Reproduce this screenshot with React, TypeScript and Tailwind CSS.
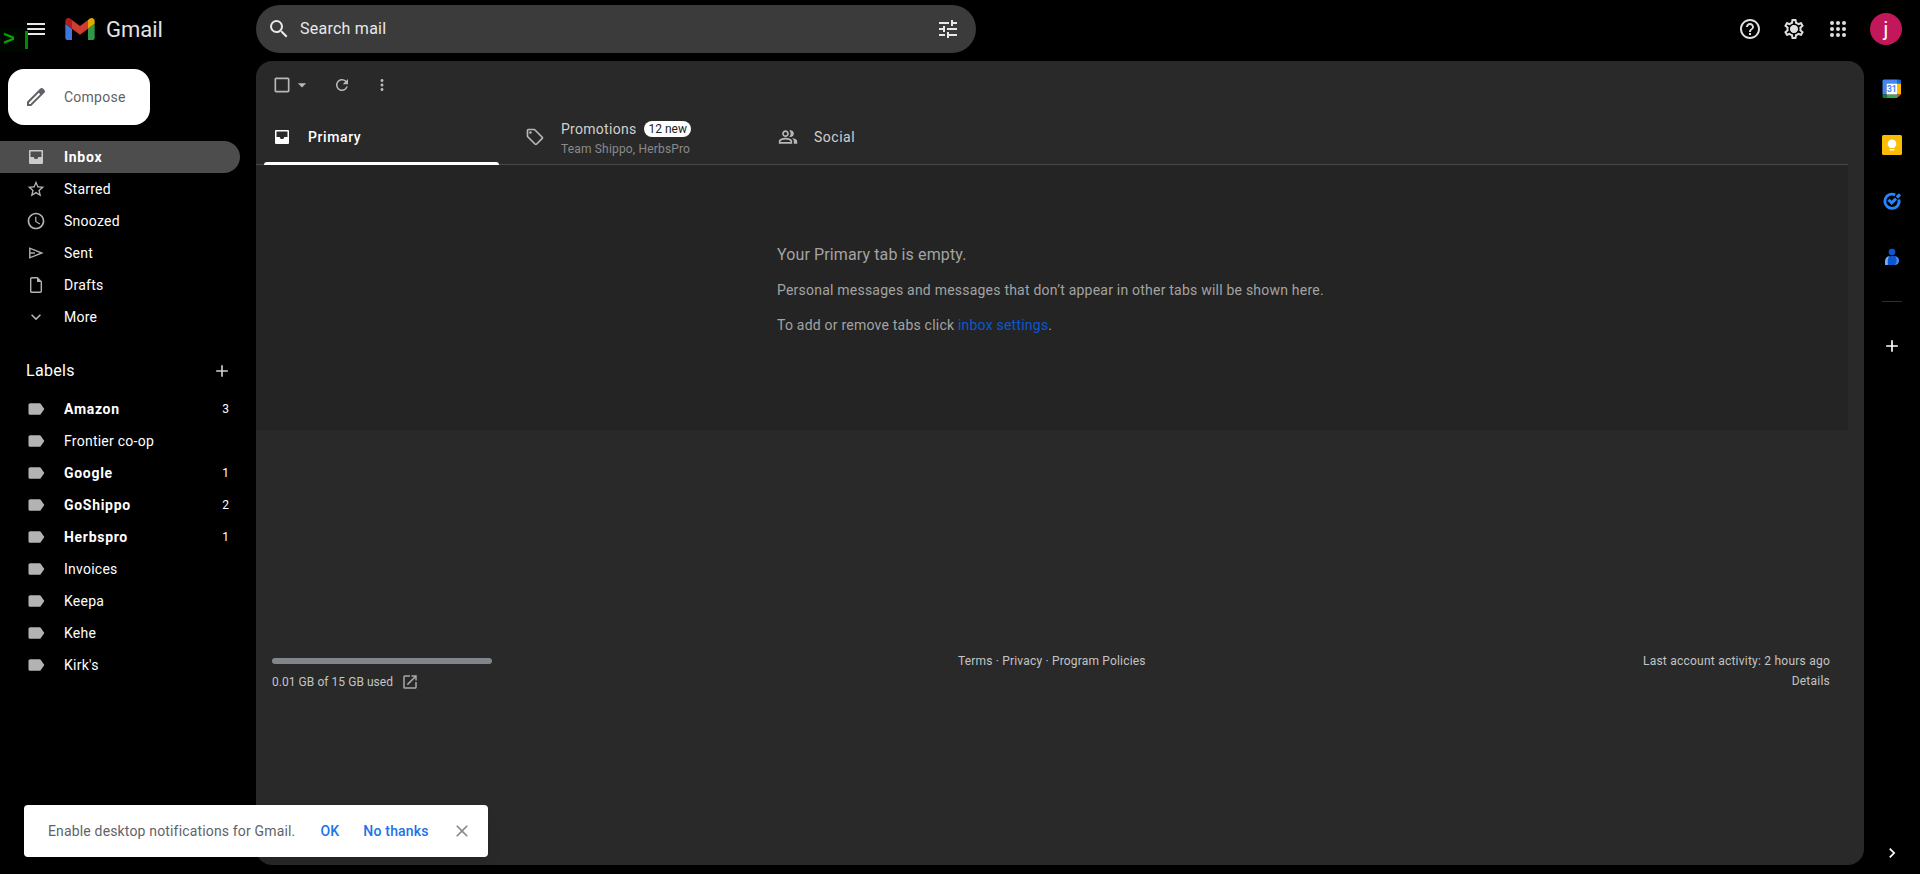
import React from 'react';
import {
  MdAdd,
  MdArrowDropDown,
  MdCheckBoxOutlineBlank,
  MdChevronRight,
  MdClose,
  MdExpandMore,
  MdHelpOutline,
  MdLabel,
  MdMenu,
  MdMoreVert,
  MdOpenInNew,
  MdOutlineLocalOffer,
  MdOutlinePeopleAlt,
  MdOutlineSettings,
  MdRefresh,
  MdSchedule,
  MdSearch,
  MdStarBorder,
  MdTune,
} from 'react-icons/md';

interface IconProps {
  className?: string;
}

interface NavItemProps {
  Icon: React.ElementType;
  label: string;
  count?: number;
  active?: boolean;
  bold?: boolean;
  iconClass?: string;
}

const InboxIcon = ({ className }: IconProps) => (
  <svg viewBox="0 0 20 20" className={className} fill="currentColor">
    <path fillRule="evenodd" d="M4 3h12a1 1 0 0 1 1 1v12a1 1 0 0 1-1 1H4a1 1 0 0 1-1-1V4a1 1 0 0 1 1-1zm.5 1.500V10h3.200l1 2h2.600l1-2h3.200V4.500z" />
  </svg>
);

const SentIcon = ({ className }: IconProps) => (
  <svg viewBox="0 0 20 20" className={className} fill="none" stroke="currentColor" strokeWidth="1.400">
    <path d="M3.800 5.200v9.600L15.800 10z" />
    <path d="M4 10h5" />
  </svg>
);

const DraftIcon = ({ className }: IconProps) => (
  <svg viewBox="0 0 20 20" className={className} fill="none" stroke="currentColor" strokeWidth="1.400">
    <path d="M5.700 2.700h5.600l4 4v9.600a1 1 0 0 1-1 1H5.700a1 1 0 0 1-1-1V3.700a1 1 0 0 1 1-1z" />
    <path fill="currentColor" stroke="none" d="M11 2.500l4.500 4.500H11z" />
  </svg>
);

const PencilIcon = ({ className }: IconProps) => (
  <svg viewBox="0 0 24 24" className={className} fill="currentColor">
    <path d="M20.410 4.940l-1.350-1.350c-.78-.78-2.050-.78-2.830 0L3 16.820V21h4.180L20.410 7.770c.79-.78.79-2.050 0-2.830zm-14 14.120L5 19v-1.360l9.820-9.820 1.410 1.410-9.820 9.830z" />
  </svg>
);

const SettingsIcon = ({ className }: IconProps) => (
  <svg viewBox="0 0 24 24" className={className} fill="currentColor">
    <MdOutlineSettings size={24} />
    <circle cx="12" cy="12" r="3.700" />
  </svg>
);

const AppsIcon = ({ className }: IconProps) => (
  <svg viewBox="0 0 24 24" className={className} fill="currentColor">
    {[6, 12, 18].map((y) => [6, 12, 18].map((x) => <circle key={`${x}-${y}`} cx={x} cy={y} r="2" />))}
  </svg>
);

const GmailLogo = () => (
  <svg viewBox="52 42 88 66" className="h-[22px] w-[30px]">
    <path fill="#3f76dc" d="M58 108h14V74L52 59v43c0 3.32 2.69 6 6 6" />
    <path fill="#2f974a" d="M120 108h14c3.32 0 6-2.69 6-6V59l-20 15" />
    <path fill="#e0a800" d="M120 48v26l20-15v-8c0-7.42-8.47-11.65-14.4-7.2" />
    <path fill="#d23c30" d="M72 74V48l24 18 24-18v26L96 92" />
    <path fill="#b01e1b" d="M52 51v8l20 15V48l-5.6-4.2c-5.94-4.45-14.4-.22-14.4 7.2" />
  </svg>
);

const CalendarIcon = () => (
  <svg viewBox="0 0 20 20" className="h-5 w-5">
    <path fill="#4285f4" d="M2 .5h13v4H4.500v11H.5V2A1.500 1.500 0 0 1 2 .5z" />
    <path fill="#1967d2" d="M15 .5h2.500A1.500 1.500 0 0 1 19 2v2.500h-4z" />
    <path fill="#fbbc04" d="M15 4.500h4v11h-4z" />
    <path fill="#34a853" d="M4.500 15.500H15V19H4.500z" />
    <path fill="#188038" d="M.5 15.500h4V19H2A1.500 1.500 0 0 1 .5 17.500z" />
    <path fill="#ea4335" d="M15 15.500h4L15 19z" />
    <path fill="#fff" d="M4.500 4.500H15v11H4.500z" />
    <text x="9.800" y="13" fontSize="8.500" fontWeight="700" textAnchor="middle" fill="#4285f4">31</text>
  </svg>
);

const KeepIcon = () => (
  <svg viewBox="0 0 20 20" className="h-5 w-5">
    <rect width="20" height="20" rx="1.500" fill="#fbbc04" />
    <path fill="#fff" d="M10 4.500a4.300 4.300 0 0 0-2.500 7.800V13h5v-.7A4.300 4.300 0 0 0 10 4.500zM7.700 14h4.600v1.500H7.700z" />
  </svg>
);

const TasksIcon = () => (
  <svg viewBox="0 0 20 20" className="h-5 w-5" fill="none" stroke="#2684fc">
    <path d="M13.200 3.900A7.100 7.100 0 1 0 16.900 8.500" strokeWidth="2.800" />
    <path d="M6.500 8.700l3.200 3.200 4.300-4.300" strokeWidth="3" />
    <path d="M14.800 6.500l3.200-3.200" strokeWidth="3.200" />
  </svg>
);

const ContactsIcon = () => (
  <svg viewBox="0 0 20 20" className="h-5 w-5">
    <circle cx="10" cy="5" r="3.300" fill="#0b57d0" />
    <path fill="#7baaf7" d="M7.500 9.200V18H3v-3.800c0-3 1.700-5 4.500-5z" />
    <path fill="#4c8df6" d="M12.500 9.200c2.800 0 4.500 1.800 4.500 4.300s-1.700 4.500-4.500 4.500z" />
    <path fill="#0b57d0" d="M9.500 9h1.700c2.200 0 3.500 1.900 3.500 4.400S13.400 18 11.200 18H5.800v-4.500C5.800 10.900 7.200 9 9.500 9z" />
  </svg>
);

const NavItem = ({ Icon, label, count, active, bold, iconClass = 'text-[#b3b3b3]' }: NavItemProps) => (
  <a
    className={`flex h-8 w-60 items-center rounded-r-full pl-[26px] pr-[11px] text-sm text-white ${
      active ? 'bg-[#4d4d4d]' : ''
    } ${bold ? 'font-bold tracking-[0.7px]' : 'tracking-[0.25px]'}`}
  >
    <Icon className={`h-5 w-5 shrink-0 ${iconClass}`} />
    <span className="ml-[18px] flex-1 whitespace-nowrap">{label}</span>
    {count && <span className="text-xs font-normal tracking-normal">{count}</span>}
  </a>
);

const mailboxes = [
  { Icon: InboxIcon, label: 'Inbox', active: true, bold: true, iconClass: 'text-[#cacaca]' },
  { Icon: MdStarBorder, label: 'Starred' },
  { Icon: MdSchedule, label: 'Snoozed' },
  { Icon: SentIcon, label: 'Sent' },
  { Icon: DraftIcon, label: 'Drafts' },
  { Icon: MdExpandMore, label: 'More' },
];

const labels = [
  { label: 'Amazon', count: 3 },
  { label: 'Frontier co-op' },
  { label: 'Google', count: 1 },
  { label: 'GoShippo', count: 2 },
  { label: 'Herbspro', count: 1 },
  { label: 'Invoices' },
  { label: 'Keepa' },
  { label: 'Kehe' },
  { label: "Kirk's" },
];

const Header = () => (
  <header className="flex h-[61px] items-start">
    <div className="flex h-[58px] w-64 items-center pl-6">
      <MdMenu className="h-6 w-6 text-[#e8e8e8]" />
      <div className="ml-[17px]">
        <GmailLogo />
      </div>
      <span className="ml-[11px] text-[22px] text-[#e3e3e3]">Gmail</span>
    </div>
    <div className="mt-[5px] flex h-12 w-[720px] items-center rounded-full bg-[#3b3b3b] pl-[11px] pr-4 text-[#e8e8e8]">
      <MdSearch className="h-6 w-6" />
      <span className="ml-[9px] flex-1 text-base tracking-[0.25px]">Search mail</span>
      <MdTune className="h-6 w-6" />
    </div>
    <div className="ml-auto flex h-[58px] items-center gap-5 pr-[18px] text-[#dedede]">
      <MdHelpOutline className="h-6 w-6" />
      <SettingsIcon className="h-6 w-6" />
      <AppsIcon className="h-6 w-6" />
      <div className="flex h-8 w-8 items-center justify-center rounded-full bg-[#c2185b] text-xl text-white">j</div>
    </div>
  </header>
);

const Prompt = () => (
  <div className="absolute left-0 top-7 flex h-6 w-7 items-center justify-between bg-[#001400]/30 pl-[3px] font-['Liberation_Mono',monospace] text-xl font-bold text-[#00a800]">
    <span>&gt;</span>
    <span className="h-[18px] w-[3px] bg-[#008a00]" />
  </div>
);

const Sidebar = () => (
  <nav className="w-64 shrink-0 pt-2">
    <button className="ml-2 flex h-14 w-[142px] items-center rounded-2xl bg-white pl-4 text-sm tracking-[0.25px] text-[#5f6368]">
      <PencilIcon className="h-6 w-6" />
      <span className="ml-4">Compose</span>
    </button>
    <div className="mt-4">
      {mailboxes.map((item) => (
        <NavItem key={item.label} {...item} />
      ))}
    </div>
    <div className="mt-4 flex h-11 w-60 items-center justify-between pl-[26px] pr-2 text-base tracking-[0.3px] text-white">
      <span>Labels</span>
      <MdAdd className="h-5 w-5 text-[#d0d0d0]" />
    </div>
    <div>
      {labels.map((item) => (
        <NavItem key={item.label} Icon={MdLabel} bold={!!item.count} {...item} />
      ))}
    </div>
  </nav>
);

const Toolbar = () => (
  <div className="flex h-12 items-center pl-4 text-[#b8b8b8]">
    <MdCheckBoxOutlineBlank className="h-5 w-5" />
    <MdArrowDropDown className="h-5 w-5" />
    <MdRefresh className="ml-[21px] h-[18px] w-[18px]" />
    <MdMoreVert className="ml-[22px] h-[18px] w-[18px]" />
  </div>
);

const Tabs = () => (
  <div className="mr-4 flex h-14 border-b border-[#474747] text-sm">
    <div className="relative flex w-[252px] items-center pl-4 text-white">
      <InboxIcon className="h-5 w-5" />
      <span className="ml-4 font-medium tracking-[0.6px]">Primary</span>
      <div className="absolute -bottom-px left-2 h-[3px] w-[235px] rounded-t-[3px] bg-white" />
    </div>
    <div className="flex w-[253px] items-center pl-[17px] text-[#b8b8b8]">
      <MdOutlineLocalOffer className="h-5 w-5" />
      <div className="ml-4 mt-1">
        <div className="flex h-5 items-center gap-2 text-[#d0d0d0]">
          <span className="tracking-[0.28px]">Promotions</span>
          <span className="rounded-full bg-white px-1 text-xs leading-4 text-[#222]">12 new</span>
        </div>
        <div className="text-xs leading-5 tracking-[0.17px] text-[#8a8a8a]">Team Shippo, HerbsPro</div>
      </div>
    </div>
    <div className="flex items-center pl-[17px] text-[#b8b8b8]">
      <MdOutlinePeopleAlt className="h-5 w-5" />
      <span className="ml-4 tracking-[0.5px] text-[#d0d0d0]">Social</span>
    </div>
  </div>
);

const EmptyState = () => (
  <div className="mr-4 h-[265px] bg-[#242424] pl-[521px] pt-[78px] text-sm tracking-[0.22px] text-[#a3a3a3]">
    <p className="h-6 text-base tracking-[0.12px]">Your Primary tab is empty.</p>
    <p className="mt-[13px] h-5">Personal messages and messages that don’t appear in other tabs will be shown here.</p>
    <p className="mt-[15px] h-5">
      To add or remove tabs click <a className="text-[#0b57d0]">inbox settings</a>.
    </p>
  </div>
);

const Footer = () => (
  <footer className="mt-[221px] flex px-4 text-xs leading-5 text-[#c4c4c4]">
    <div className="w-[686px]">
      <div className="mt-[7px] h-1.5 w-[220px] rounded-full bg-[#80868b]" />
      <div className="mt-2 flex items-center">
        <span className="tracking-[0.05px]">0.01 GB of 15 GB used</span>
        <MdOpenInNew className="ml-2 h-[18px] w-[18px] text-[#a8a8a8]" />
      </div>
    </div>
    <div className="tracking-[0.18px]">Terms · Privacy · Program Policies</div>
    <div className="ml-auto pr-[18px] text-right tracking-[0.23px]">
      <div>Last account activity: 2 hours ago</div>
      <div>Details</div>
    </div>
  </footer>
);

const SidePanel = () => (
  <aside className="flex w-14 shrink-0 flex-col items-center pb-[11px] pt-[18px]">
    <div className="flex flex-col gap-9">
      <CalendarIcon />
      <KeepIcon />
      <TasksIcon />
      <ContactsIcon />
    </div>
    <div className="mt-[34px] h-px w-5 bg-[#2e2e2e]" />
    <MdAdd className="mt-[34px] h-5 w-5 text-white" />
    <MdChevronRight className="mt-auto h-5 w-5 text-white" />
  </aside>
);

const NotificationToast = () => (
  <div className="absolute left-6 top-[805px] flex h-[52px] w-[464px] items-center rounded bg-white pl-6 text-sm text-[#5f6368] shadow-lg">
    <span className="tracking-[0.16px]">Enable desktop notifications for Gmail.</span>
    <button className="ml-[25px] font-medium tracking-[0.2px] text-[#1a73e8]">OK</button>
    <button className="ml-6 font-medium tracking-[0.2px] text-[#1a73e8]">No thanks</button>
    <MdClose className="ml-[23px] h-5 w-5 text-[#8a8a8a]" />
  </div>
);

export default function App() {
  return (
    <div className="relative flex h-[874px] w-[1920px] flex-col overflow-hidden bg-black font-['Roboto',sans-serif]">
      <Prompt />
      <Header />
      <div className="flex h-[813px]">
        <Sidebar />
        <main className="h-[804px] flex-1 rounded-2xl bg-[#292929]">
          <Toolbar />
          <Tabs />
          <EmptyState />
          <Footer />
        </main>
        <SidePanel />
      </div>
      <NotificationToast />
    </div>
  );
}
